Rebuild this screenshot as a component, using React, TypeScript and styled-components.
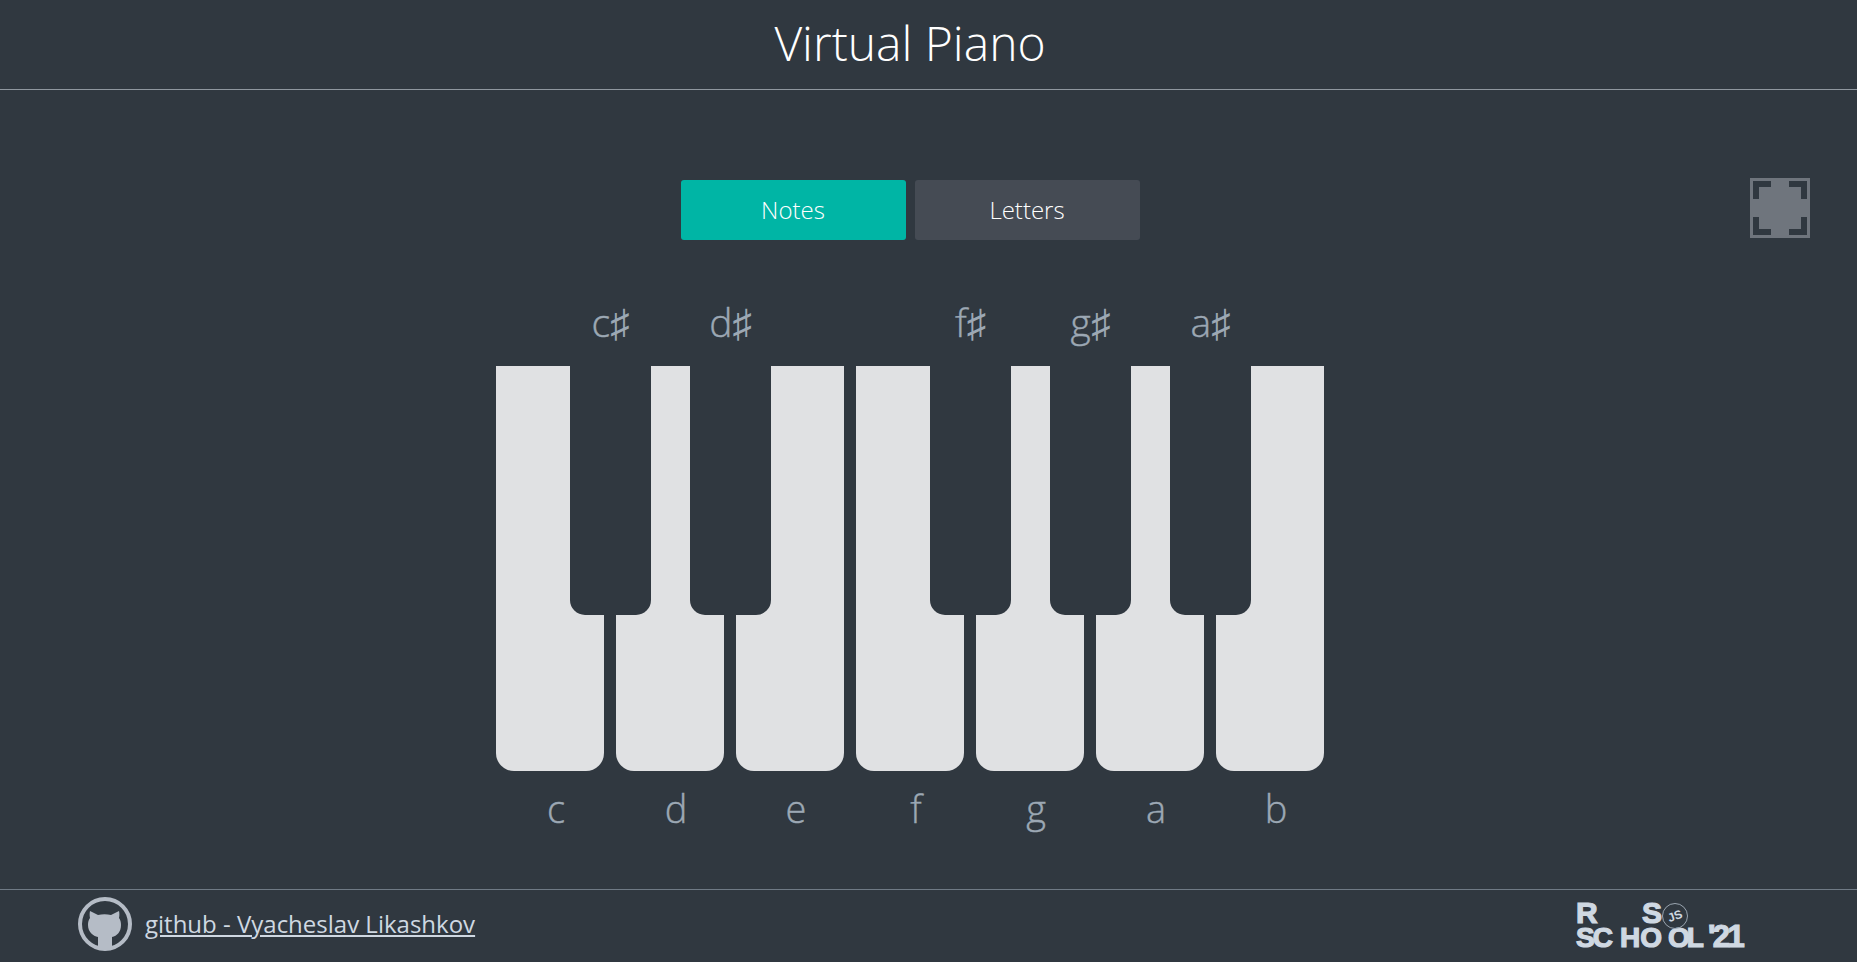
import styled, { createGlobalStyle } from "styled-components";

const GlobalStyle = createGlobalStyle`
  html, body {
    margin: 0;
    padding: 0;
    height: 100%;
    background-color: #303840;
    font-family: "Open Sans", "DejaVu Sans", sans-serif;
  }
  #root {
    height: 100%;
  }
`;

const Page = styled.div`
  height: 962px;
  display: flex;
  flex-direction: column;
  overflow: hidden;
`;

const Header = styled.header`
  height: 85px;
  padding: 0 37px 4px 0;
  border-bottom: 1px solid #8f979f;
  display: flex;
  align-items: center;
  justify-content: center;
`;

const Title = styled.h1`
  margin: 0;
  font-size: 48px;
  font-weight: 300;
  color: #ffffff;
`;

const Main = styled.main`
  position: relative;
  flex: 1;
  padding: 90px 37px 0 0;
  display: flex;
  flex-direction: column;
  align-items: center;
`;

const Tabs = styled.div`
  display: flex;
  gap: 9px;
`;

const Tab = styled.button<{ $active?: boolean }>`
  width: 225px;
  height: 60px;
  border: 0;
  border-radius: 3px;
  padding: 0 0 2px;
  background-color: ${(p) => (p.$active ? "#00b5a5" : "#454b54")};
  color: #ffffff;
  font-family: inherit;
  font-size: 24px;
  font-weight: 300;
`;

const FullscreenButton = styled.svg`
  position: absolute;
  top: 88px;
  right: 47px;
  width: 60px;
  height: 60px;
`;

const Piano = styled.div`
  margin-top: 126px;
  display: flex;
  gap: 12px;
`;

const Note = styled.div`
  width: 108px;
  display: flex;
  flex-direction: column;
`;

const WhiteKey = styled.div`
  position: relative;
  height: 405px;
  background-color: #e0e1e3;
  border-radius: 0 0 18px 18px;
`;

const BlackKey = styled.div`
  position: absolute;
  z-index: 1;
  top: 0;
  left: 74px;
  width: 81px;
  height: 249px;
  background-color: #303840;
  border-radius: 0 0 15px 15px;
`;

const SharpLabel = styled.span`
  position: absolute;
  bottom: 100%;
  left: -5px;
  right: -5px;
  margin-bottom: 18px;
  text-align: center;
  font-size: 39px;
  font-weight: 300;
  line-height: 52px;
  color: #9ca8b4;
  -webkit-text-stroke: 0.4px #9ca8b4;
`;

const Accidental = styled.span`
  -webkit-text-stroke: 0;
`;

const LetterLabel = styled.span`
  padding: 11px 0 0 12px;
  text-align: center;
  font-size: 38px;
  font-weight: 300;
  line-height: 52px;
  color: #9ca8b4;
  -webkit-text-stroke: 0.4px #9ca8b4;
`;

const Footer = styled.footer`
  height: 72px;
  border-top: 1px solid #6f7a85;
  display: flex;
  align-items: center;
  justify-content: space-between;
  padding: 0 114px 0 78px;
`;

const AuthorLink = styled.a`
  display: flex;
  align-items: center;
  gap: 13px;
  margin-bottom: 5px;
  color: #cfd8e2;
  font-size: 24px;
  font-weight: 400;
`;

const GithubIcon = styled.svg`
  width: 54px;
  height: 54px;
  flex: none;
`;

const LogoMark = styled.svg`
  width: 170px;
  height: 52px;
  margin-bottom: 5px;
  overflow: visible;
`;

const notes = [
  { letter: "c", sharp: true },
  { letter: "d", sharp: true },
  { letter: "e" },
  { letter: "f", sharp: true },
  { letter: "g", sharp: true },
  { letter: "a", sharp: true },
  { letter: "b" },
];

export default function App() {
  return (
    <Page>
      <GlobalStyle />
      <Header>
        <Title>Virtual Piano</Title>
      </Header>
      <Main>
        <Tabs>
          <Tab $active>Notes</Tab>
          <Tab>Letters</Tab>
        </Tabs>
        <FullscreenButton viewBox="0 0 60 60">
          <rect width="60" height="60" fill="#6f757d" />
          <path
            fill="#303840"
            d="M3 3h18v6H9v12H3zM39 3h18v18h-6V9H39zM3 39h6v12h12v6H3zM51 39h6v18H39v-6h12z"
          />
        </FullscreenButton>
        <Piano>
          {notes.map((note) => (
            <Note key={note.letter}>
              <WhiteKey>
                {note.sharp && (
                  <BlackKey>
                    <SharpLabel>
                      {note.letter}
                      <Accidental>♯</Accidental>
                    </SharpLabel>
                  </BlackKey>
                )}
              </WhiteKey>
              <LetterLabel>{note.letter}</LetterLabel>
            </Note>
          ))}
        </Piano>
      </Main>
      <Footer>
        <AuthorLink href="#">
          <GithubIcon viewBox="0 0 54 54">
            <circle cx="27" cy="27" r="25" fill="none" stroke="#b5bcc6" strokeWidth="4" />
            <path
              fill="#b5bcc6"
              d="M12 14l8 4c4-1 9-1 13 0l8-4c.5 2 .5 5 0 7 1.5 2 2 4 2 7 0 7-4 11-9 12v12H20V40c-5-1-10-5-10-12 0-3 .5-5 2-7-.5-2-.5-5 0-7z"
            />
          </GithubIcon>
          github - Vyacheslav Likashkov
        </AuthorLink>
        <LogoMark viewBox="0 0 170 52">
          <g fill="#cfd8e2" fontFamily="Liberation Sans" fontWeight="700" fontSize="28" stroke="#cfd8e2" strokeWidth="1.2">
            <text x="3" y="25" fontSize="30">R</text>
            <text x="69" y="25" fontSize="30">S</text>
            <text x="3" y="49" letterSpacing="-2">SC</text>
            <text x="47" y="49">HO</text>
            <text x="95" y="49" letterSpacing="-3">OL</text>
            <text x="135" y="49" fontSize="31" letterSpacing="-2.5">'21</text>
          </g>
          <circle cx="102" cy="18" r="12.5" fill="none" stroke="#9aa5b0" strokeWidth="1" />
          <text x="102" y="22" textAnchor="middle" fontFamily="Liberation Sans" fontWeight="700" fontSize="12" fill="#cfd8e2" transform="rotate(-20 102 18)">JS</text>
        </LogoMark>
      </Footer>
    </Page>
  );
}
